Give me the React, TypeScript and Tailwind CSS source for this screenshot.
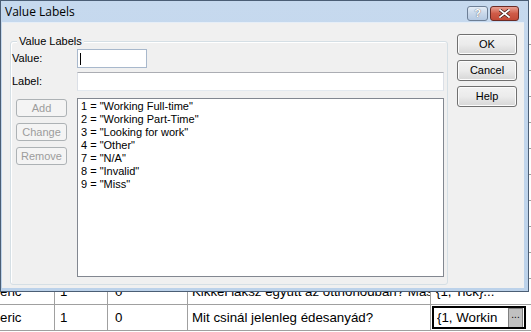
import React from "react";

const sans = { fontFamily: '"Liberation Sans", Arial, sans-serif' };

function WinButton({ label, disabled }: { label: string; disabled?: boolean }) {
  if (disabled) {
    return (
      <div className="h-[18px] w-[51px] rounded-[3px] border border-[#adb2b5] bg-[#f4f4f4] flex items-center justify-center text-[11px] text-[#9c9c9c]">
        {label}
      </div>
    );
  }
  return (
    <div className="h-[21px] w-[60px] rounded-[3px] border border-[#707070] bg-gradient-to-b from-[#f2f2f2] via-[#ebebeb] to-[#d6d6d6] flex items-center justify-center text-[11px] text-black shadow-[inset_0_0_0_1px_#fcfcfc]">
      {label}
    </div>
  );
}

const items = [
  '1 = "Working Full-time"',
  '2 = "Working Part-Time"',
  '3 = "Looking for work"',
  '4 = "Other"',
  '7 = "N/A"',
  '8 = "Invalid"',
  '9 = "Miss"',
];

function Row({
  c4,
  c5,
  active,
}: {
  c4: string;
  c5: string;
  active?: boolean;
}) {
  return (
    <div className="flex h-[26px] border-b border-[#a0a0a0] text-[13.3px] text-black shrink-0">
      <div className="w-[55px] border-r border-[#a0a0a0] overflow-hidden flex items-center whitespace-nowrap">
        <span className="-ml-[28px]">Numeric</span>
      </div>
      <div className="w-[53px] border-r border-[#a0a0a0] flex items-center pl-[5px]">1</div>
      <div className="w-[80px] border-r border-[#a0a0a0] flex items-center pl-[7px]">0</div>
      <div className="w-[243px] border-r border-[#a0a0a0] flex items-center pl-[4px] whitespace-nowrap overflow-hidden">
        {c4}
      </div>
      {active ? (
        <div className="flex-1 flex items-stretch py-[1px] pl-[1px]">
          <div className="w-[94px] border-2 border-black flex items-center pl-[3px] pr-[1px] whitespace-nowrap overflow-hidden">
            <span className="flex-1 overflow-hidden">{c5}</span>
            <div className="w-[15px] h-[20px] bg-[#c0c0c0] border border-[#808080] flex items-start justify-center text-[10px] leading-[12px]">
              ...
            </div>
          </div>
        </div>
      ) : (
        <div className="flex-1 flex items-center pl-[5px] whitespace-nowrap overflow-hidden">{c5}</div>
      )}
    </div>
  );
}

export default function App() {
  return (
    <div className="relative w-[531px] h-[332px] overflow-hidden bg-white" style={sans}>
      {/* background grid */}
      <div className="flex flex-col justify-end h-[332px] pb-[1px]">
        {Array.from({ length: 10 }).map((_, i) => (
          <div key={i} className="h-[26px] border-b border-[#a0a0a0] shrink-0" />
        ))}
        <Row c4="Kikkel laksz együtt az otthonodban? Más" c5="{1, Tick}..." />
        <Row c4="Mit csinál jelenleg édesanyád?" c5="{1, Workin" active />
      </div>

      {/* dialog window */}
      <div className="absolute left-0 top-0 w-[529px] h-[292px] border border-[#4b5e75] bg-gradient-to-b from-[#c6d9ee] to-[#bcd2ea] flex flex-col">
        {/* title bar */}
        <div className="h-[21px] flex items-center pl-[4px] pr-[9px] shrink-0">
          <span className="text-[12px] text-black" style={{ fontFamily: '"Open Sans", "Noto Sans", sans-serif' }}>
            Value Labels
          </span>
          <div className="flex-1" />
          <div className="mt-[3px] flex gap-[2px]">
            <div className="w-[21px] h-[15px] rounded-[3px] border border-[#6d7f96] bg-gradient-to-b from-[#e4edf7] via-[#c9d8ea] to-[#b5c9e2] flex items-center justify-center text-[11px] font-bold text-white [text-shadow:0_0_1px_#334]">
              ?
            </div>
            <div className="w-[29px] h-[15px] rounded-[3px] border border-[#6b2b25] bg-gradient-to-b from-[#e8a093] via-[#cf5b48] to-[#c34a37] flex items-center justify-center">
              <svg width="11" height="9" viewBox="0 0 11 9">
                <path d="M1 1 L10 8 M10 1 L1 8" stroke="#3a1510" strokeWidth="3.2" strokeLinecap="square" />
                <path d="M1 1 L10 8 M10 1 L1 8" stroke="#ffffff" strokeWidth="1.8" strokeLinecap="square" />
              </svg>
            </div>
          </div>
        </div>

        {/* client area */}
        <div className="flex-1 ml-[1px] mr-[4px] mb-[3px] bg-[#f0f0f0] border-t border-[#e6eef7] flex pt-[11px] pl-[8px] text-[11px] text-black">
          {/* group box */}
          <div className="relative mt-[7px] w-[438px] h-[244px] rounded-[3px] border border-[#d5dfe5] shadow-[inset_1px_1px_0_#ffffff]">
            <div className="absolute -top-[8px] left-[6px] px-[2px] bg-[#f0f0f0] leading-[14px]">Value Labels</div>
            <div className="flex flex-col pt-[7px]">
              <div className="flex items-center h-[19px]">
                <div className="w-[66px] pl-[1px]">Value:</div>
                <div className="relative w-[70px] h-[19px] bg-white border border-[#a8b8cc]">
                  <div className="absolute left-[2px] top-[3px] w-[1px] h-[12px] bg-black" />
                </div>
              </div>
              <div className="flex items-center h-[19px] mt-[4px]">
                <div className="w-[66px] pl-[1px]">Label:</div>
                <div className="w-[367px] h-[19px] bg-white border border-[#abadb3] border-l-[#dbdfe6] border-r-[#dbdfe6] border-b-[#e3e9ef]" />
              </div>
              <div className="flex mt-[7px]">
                <div className="w-[66px] pl-[5px] pt-[1px] flex flex-col gap-[6px]">
                  <WinButton label="Add" disabled />
                  <WinButton label="Change" disabled />
                  <WinButton label="Remove" disabled />
                </div>
                <div className="w-[367px] h-[179px] bg-white border border-[#828790] pl-[3px] pt-[1px]">
                  {items.map((t) => (
                    <div key={t} className="h-[13px] leading-[13px] whitespace-nowrap">
                      {t}
                    </div>
                  ))}
                </div>
              </div>
            </div>
          </div>

          {/* right buttons */}
          <div className="ml-[9px] flex flex-col gap-[5px]">
            <WinButton label="OK" />
            <WinButton label="Cancel" />
            <WinButton label="Help" />
          </div>
        </div>
      </div>
    </div>
  );
}
